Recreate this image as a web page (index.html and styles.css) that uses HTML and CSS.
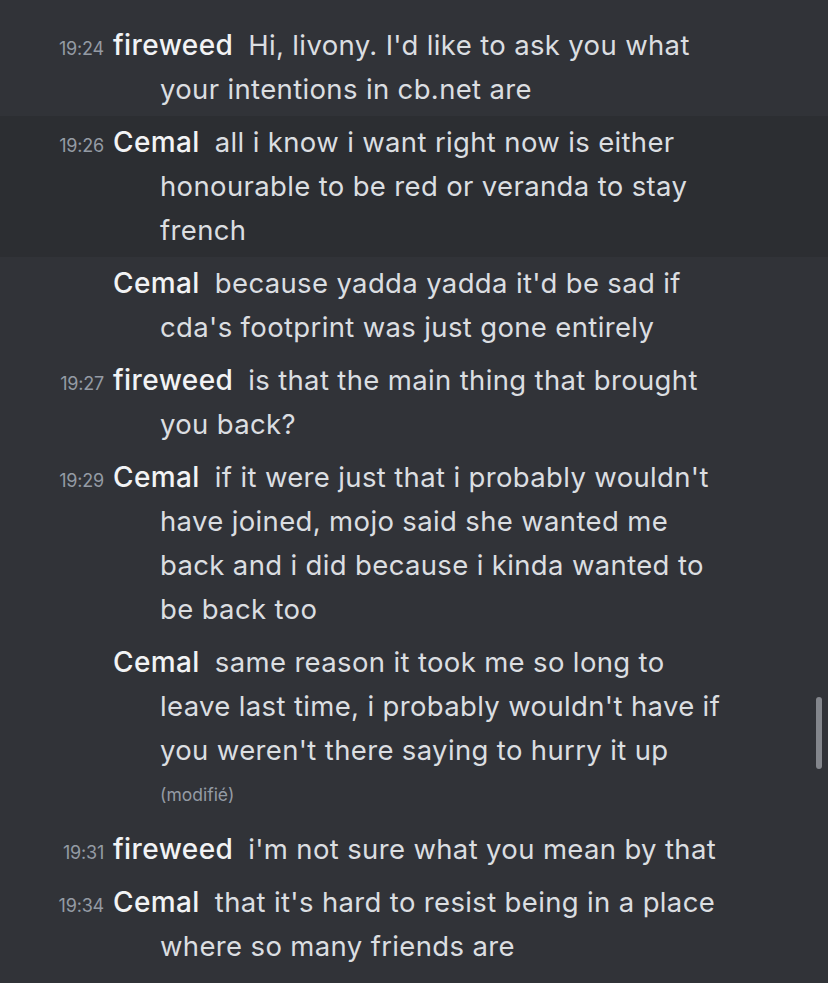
FILE: index.html
```html
<!DOCTYPE html>
<html lang="en">
<head>
<meta charset="utf-8">
<title>Chat</title>
<link rel="stylesheet" href="styles.css">
</head>
<body>
<main class="chat">
  <div class="msg">
    <p class="line"><span class="time">19:24</span><span class="name">fireweed</span>Hi, livony. I'd like to ask you what your intentions in cb.net are</p>
  </div>
  <div class="msg msg-active">
    <p class="line"><span class="time">19:26</span><span class="name">Cemal</span>all i know i want right now is either honourable to be red or veranda to stay french</p>
  </div>
  <div class="msg">
    <p class="line"><span class="time"></span><span class="name">Cemal</span>because yadda yadda it'd be sad if cda's footprint was just gone entirely</p>
  </div>
  <div class="msg">
    <p class="line"><span class="time">19:27</span><span class="name">fireweed</span>is that the main thing that brought you back?</p>
  </div>
  <div class="msg">
    <p class="line"><span class="time">19:29</span><span class="name">Cemal</span>if it were just that i probably wouldn't have joined, mojo said she wanted me back and i did because i kinda wanted to be back too</p>
  </div>
  <div class="msg">
    <p class="line"><span class="time"></span><span class="name">Cemal</span>same reason it took me so long to leave last time, i probably wouldn't have if you weren't there saying to hurry it up</p>
    <p class="edited">(modifié)</p>
  </div>
  <div class="msg">
    <p class="line"><span class="time">19:31</span><span class="name">fireweed</span>i'm not sure what you mean by that</p>
  </div>
  <div class="msg">
    <p class="line"><span class="time">19:34</span><span class="name">Cemal</span>that it's hard to resist being in a place where so many friends are</p>
  </div>
  <div class="scrollbar"></div>
</main>
</body>
</html>
```

FILE: styles.css
```css
html, body {
  margin: 0;
  padding: 0;
  background: #313338;
}
body {
  width: 828px;
  height: 983px;
  overflow: hidden;
  font-family: "Inter", "Noto Sans", sans-serif;
  color: #dbdee1;
}
.chat {
  position: relative;
  padding-top: 19px;
  height: 964px;
}
.msg {
  padding: 4px 0 5px;
}
.msg-active {
  background: #2c2e32;
}
.line {
  margin: 0;
  width: 566px;
  padding-left: 160px;
  text-indent: -112px;
  font-size: 27.5px;
  letter-spacing: 0.35px;
  line-height: 44px;
}
.time {
  display: inline-block;
  width: 56px;
  margin-right: 9px;
  text-align: right;
  text-indent: 0;
  font-size: 18px;
  letter-spacing: -0.2px;
  line-height: 1;
  color: #949ba4;
}
.name {
  color: #f2f3f5;
  font-weight: 500;
  font-size: 28px;
  letter-spacing: 0.4px;
  margin-right: 15px;
}
.edited {
  margin: 0;
  padding-left: 160px;
  font-size: 17.5px;
  line-height: 46px;
  letter-spacing: 0;
  color: #949ba4;
}
.scrollbar {
  position: absolute;
  left: 816px;
  top: 697px;
  width: 6px;
  height: 72px;
  border-radius: 3px;
  background: #83868c;
}
```
